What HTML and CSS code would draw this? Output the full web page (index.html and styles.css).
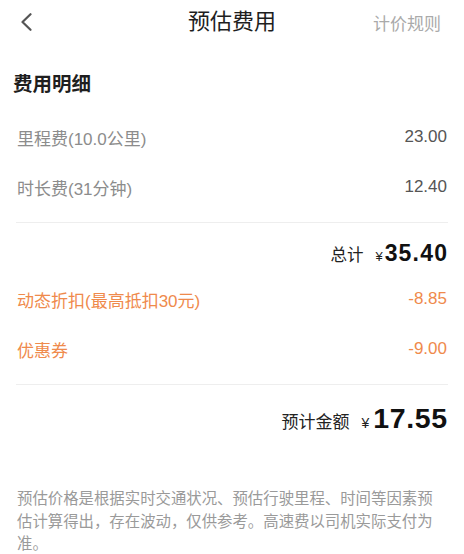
FILE: index.html
```html
<!DOCTYPE html>
<html lang="zh-CN">
<head>
<meta charset="utf-8">
<title>预估费用</title>
<link rel="stylesheet" href="styles.css">
</head>
<body>
<header class="nav">
  <div class="nav-left">
    <svg class="back" width="12" height="18" viewBox="0 0 12 18"><path d="M10.5 1.2 L2.5 9 L10.5 16.8" fill="none" stroke="#555" stroke-width="2.2" stroke-linecap="round" stroke-linejoin="round"/></svg>
  </div>
  <div class="nav-title">预估费用</div>
  <div class="nav-right">计价规则</div>
</header>
<main class="content">
  <h2 class="section-title">费用明细</h2>
  <div class="row"><span class="label">里程费(10.0公里)</span><span class="value">23.00</span></div>
  <div class="row"><span class="label">时长费(31分钟)</span><span class="value">12.40</span></div>
  <div class="divider"></div>
  <div class="total-row">
    <span class="total-label">总计</span><span class="yen">¥</span><span class="total-num">35.40</span>
  </div>
  <div class="row discount"><span class="label">动态折扣(最高抵扣30元)</span><span class="value">-8.85</span></div>
  <div class="row discount"><span class="label">优惠券</span><span class="value">-9.00</span></div>
  <div class="divider"></div>
  <div class="final-row">
    <span class="final-label">预计金额</span><span class="yen final-yen">¥</span><span class="final-num">17.55</span>
  </div>
  <p class="note">预估价格是根据实时交通状况、预估行驶里程、时间等因素预估计算得出，存在波动，仅供参考。高速费以司机实际支付为准。</p>
</main>
</body>
</html>
```
FILE: styles.css
```css
* { box-sizing: border-box; }
body {
  margin: 0;
  background: #fff;
  font-family: "Liberation Sans", "Noto Sans CJK SC", sans-serif;
  color: #222;
}
.nav {
  height: 44px;
  display: grid;
  grid-template-columns: 1fr auto 1fr;
  align-items: center;
}
.nav-left { padding-left: 20px; display: flex; align-items: center; }
.back { display: block; margin-top: -1px; }
.nav-title {
  font-size: 22px;
  line-height: 44px;
  color: #1e1e1e;
}
.nav-right {
  justify-self: end;
  padding-right: 23px;
  font-size: 17px;
  color: #aaa;
}
.content { padding: 0 17px; }
.section-title {
  margin: 26px 0 14px -4px;
  font-size: 19.5px;
  line-height: 28px;
  font-weight: bold;
  color: #1e1e1e;
}
.row {
  height: 50px;
  display: flex;
  justify-content: space-between;
  align-items: center;
  font-size: 17px;
}
.label { color: #8c8c8c; }
.value { color: #555; }
.discount .label, .discount .value { color: #ef8a4c; }
.divider {
  height: 1px;
  background: #eeeeee;
  margin: 10px -1px 0 -1px;
}
.total-row {
  display: flex;
  justify-content: flex-end;
  align-items: baseline;
  padding-top: 15px;
  height: 51px;
  line-height: 30px;
}
.total-label { font-size: 16.5px; color: #222; margin-right: 12px; }
.yen { font-size: 13px; color: #222; margin-right: 2px; }
.total-num {
  font-size: 23px;
  font-weight: bold;
  letter-spacing: 1.2px;
  margin-right: -1.2px;
  color: #111;
}
.final-row {
  display: flex;
  justify-content: flex-end;
  align-items: baseline;
  padding-top: 15px;
  height: 51px;
  line-height: 36px;
}
.final-label { font-size: 17px; color: #222; margin-right: 12px; }
.final-yen { font-size: 14px; margin-right: 4px; }
.final-num {
  font-size: 28.5px;
  font-weight: bold;
  letter-spacing: 0.6px;
  margin-right: -0.6px;
  color: #111;
}
.note {
  margin: 50px 0 0 0;
  font-family: "Noto Sans CJK SC", sans-serif;
  font-size: 15.4px;
  line-height: 22.5px;
  color: #9a9a9a;
}
```
